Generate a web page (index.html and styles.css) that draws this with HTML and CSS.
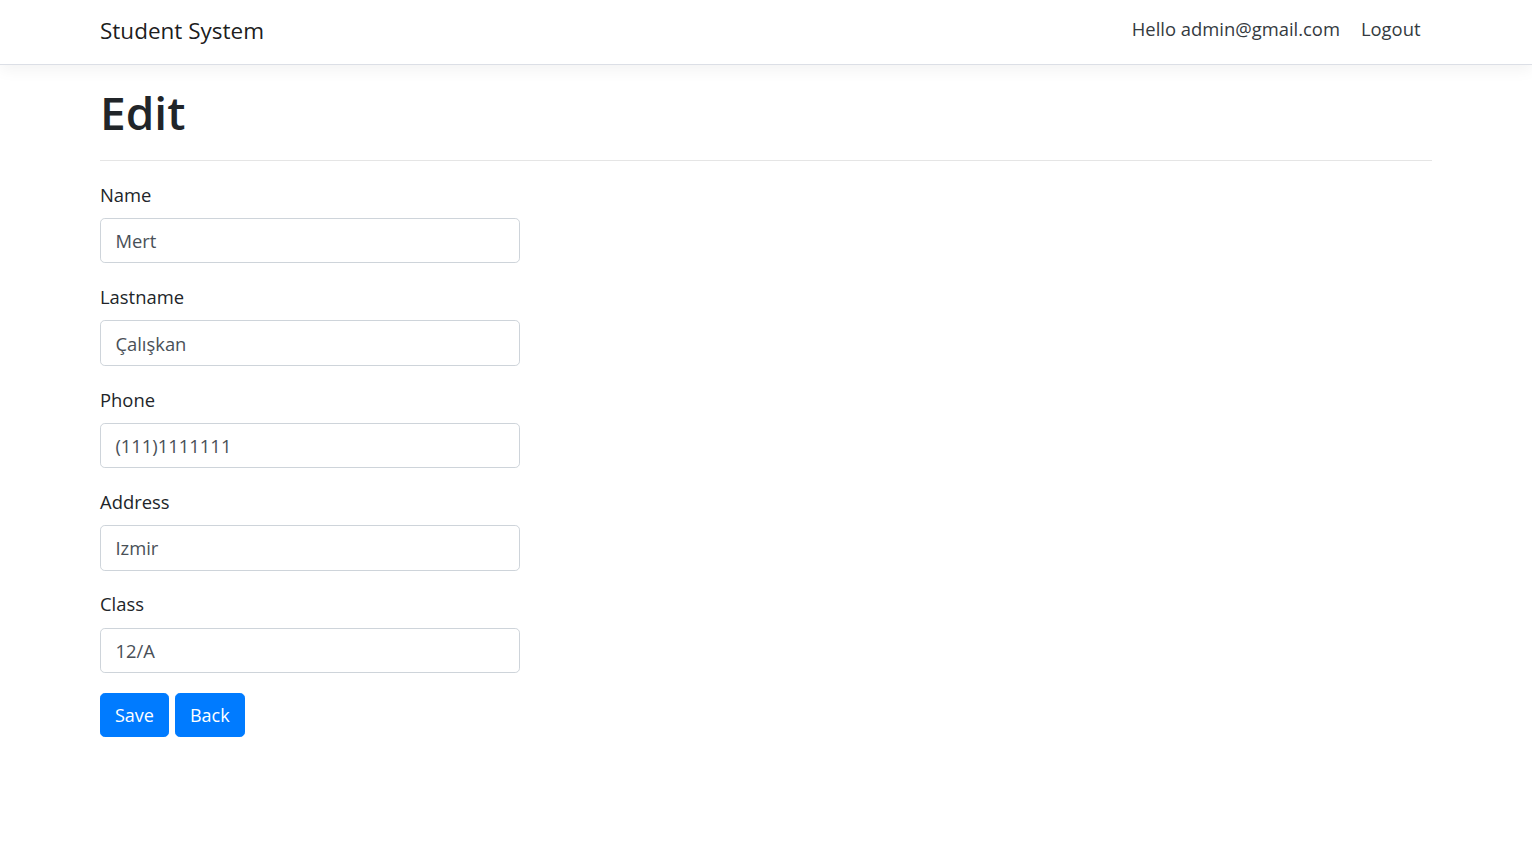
FILE: index.html
```html
<!DOCTYPE html>
<html lang="en">
<head>
<meta charset="utf-8">
<title>Edit - Student System</title>
<link rel="stylesheet" href="styles.css">
</head>
<body>
<header class="navbar">
  <div class="container nav-inner">
    <a class="brand" href="#">Student System</a>
    <ul class="nav">
      <li><a class="nav-link" href="#">Hello admin@gmail.com</a></li>
      <li><a class="nav-link" href="#">Logout</a></li>
    </ul>
  </div>
</header>
<main class="container main">
  <h1 class="title">Edit</h1>
  <hr class="rule">
  <form class="form">
    <div class="form-group">
      <label class="label" for="name">Name</label>
      <input class="control" id="name" value="Mert">
    </div>
    <div class="form-group">
      <label class="label" for="lastname">Lastname</label>
      <input class="control" id="lastname" value="Çalışkan">
    </div>
    <div class="form-group">
      <label class="label" for="phone">Phone</label>
      <input class="control" id="phone" value="(111)1111111">
    </div>
    <div class="form-group">
      <label class="label" for="address">Address</label>
      <input class="control" id="address" value="Izmir">
    </div>
    <div class="form-group">
      <label class="label" for="class">Class</label>
      <input class="control" id="class" value="12/A">
    </div>
    <div class="actions">
      <button type="button" class="btn">Save</button>
      <button type="button" class="btn">Back</button>
    </div>
  </form>
</main>
</body>
</html>
```
FILE: styles.css
```css
* { box-sizing: border-box; }
html, body {
  margin: 0;
  padding: 0;
  background: #fff;
}
body {
  font-family: "Open Sans", "Noto Sans", "Liberation Sans", sans-serif;
  font-size: 19.2px;
  line-height: 28.8px;
  color: #212529;
}
.container {
  width: 1332px;
  margin: 0 auto;
}
.navbar {
  height: 65px;
  background: #fff;
  border-bottom: 1px solid #dcdfe6;
  box-shadow: 0 4.8px 14.4px rgba(0, 0, 0, 0.05);
}
.nav-inner {
  height: 64px;
  display: flex;
  align-items: center;
  justify-content: space-between;
}
.brand {
  font-size: 22.5px;
  line-height: 36px;
  color: rgba(0, 0, 0, 0.9);
  text-decoration: none;
  margin-top: -2px;
}
.nav {
  list-style: none;
  margin: 0;
  padding: 0;
  display: flex;
  margin-top: -5px;
  margin-right: 1px;
}
.nav-link {
  display: block;
  padding: 7px 10.5px;
  font-size: 18.4px;
  color: #343a40;
  text-decoration: none;
}
.main {
  padding-top: 19px;
}
.title {
  font-size: 46px;
  font-weight: 600;
  line-height: 57.6px;
  margin: 0 0 9.6px;
}
.rule {
  margin: 18px 0 20px;
  border: 0;
  border-top: 1px solid rgba(0, 0, 0, 0.1);
}
.form {
  width: 420px;
}
.form-group {
  margin-bottom: 19.7px;
}
.label {
  display: block;
  font-size: 18.4px;
  margin-bottom: 8.4px;
}
.control {
  display: block;
  width: 100%;
  height: 45.6px;
  padding: 7px 14.4px;
  font-family: inherit;
  font-size: 18.4px;
  color: #495057;
  background: #fff;
  border: 1px solid #ced4da;
  border-radius: 4.8px;
  outline: none;
}
.actions {
  display: flex;
  gap: 6px;
}
.btn {
  height: 44px;
  padding: 0 14px;
  font-family: inherit;
  font-size: 18px;
  color: #fff;
  background: #007bff;
  border: 1px solid #007bff;
  border-radius: 4.8px;
  cursor: pointer;
}
```
